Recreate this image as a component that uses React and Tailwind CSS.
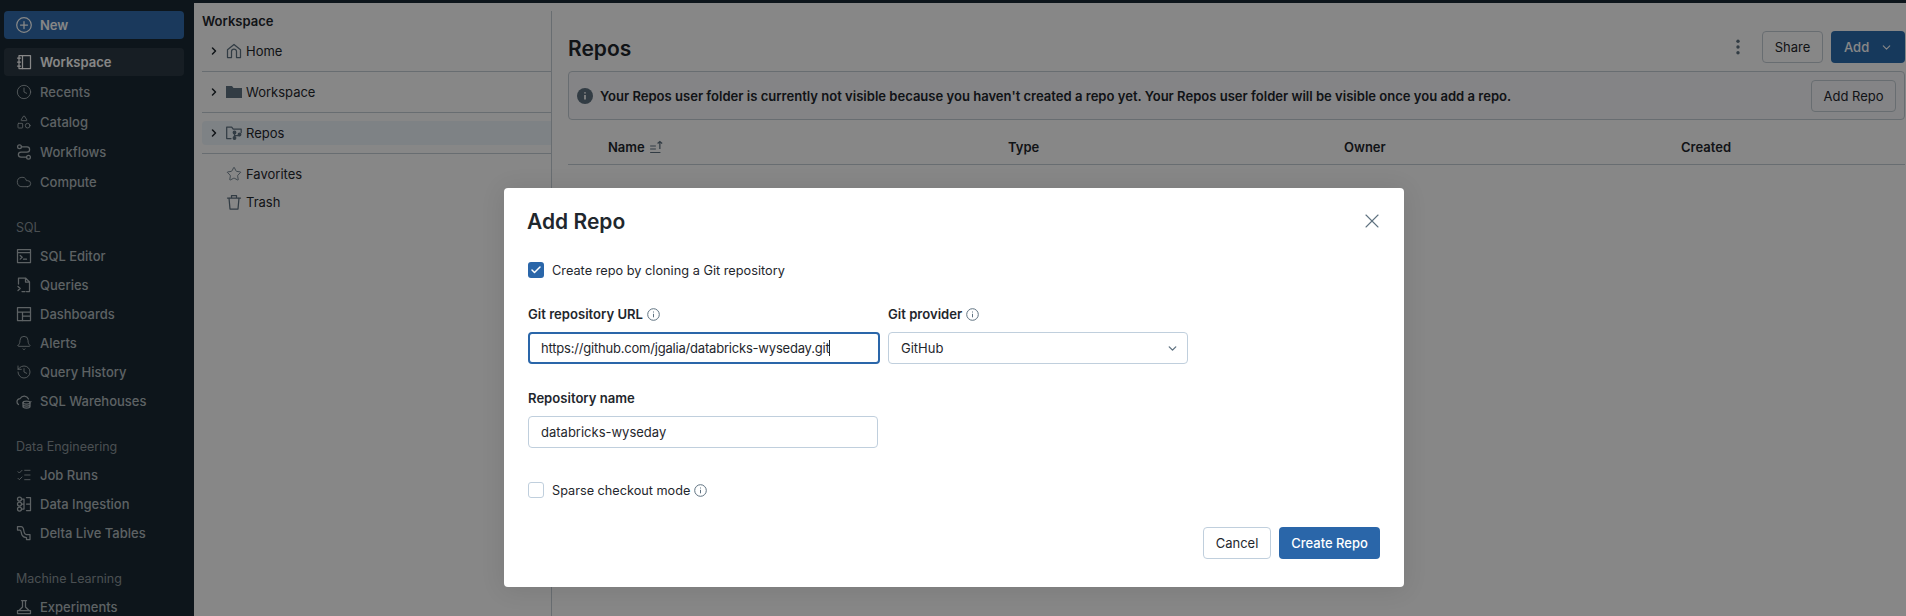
import React from "react";
import { Clock, Shapes, Cloud, Bell, History, ListChecks, Star, X, ChevronDown, ChevronRight, Check } from "lucide-react";

const S = ({ children, size = 16, className = "" }) => (
  <svg width={size} height={size} viewBox="0 0 16 16" fill="none" stroke="currentColor" strokeWidth="1.250" strokeLinecap="round" strokeLinejoin="round" className={`shrink-0 ${className}`}>
    {children}
  </svg>
);

const T = ({ children, className = "" }) => <span className={`pt-[2px] ${className}`}>{children}</span>;

const PlusCircle = () => (<S><circle cx="8" cy="8" r="7.300" /><path d="M8 4.500v7M4.500 8h7" /></S>);
const NotebookI = () => (<S><rect x="3" y="1.500" width="11.500" height="13" /><path d="M6.500 1.500v13M1.500 4h3M1.500 8h3M1.500 12h3" /></S>);
const WorkflowsI = () => (<S><circle cx="3.500" cy="2.800" r="1.900" /><path d="M5.400 2.800H11a2.600 2.600 0 0 1 0 5.200H5a2.600 2.600 0 0 0 0 5.200h5.600" /><circle cx="12.500" cy="13.200" r="1.900" /></S>);
const SqlEditorI = () => (<S><rect x="1.500" y="1.500" width="13" height="13" /><path d="M1.500 4.500h13M4.200 7.500l2 1.800-2 1.800M7.500 11.200h3" /></S>);
const QueriesI = () => (<S><path d="M2.500 7V1h7l4 4v9.500h-3M9.500 1v4h4M2 9.500l2.200 2-2.200 2M6 14.500h3" /></S>);
const DashI = () => (<S><rect x="1.500" y="1.500" width="13" height="13" /><path d="M1.500 6h13M6.500 6v8.500M6.500 10h8" /></S>);
const WarehouseI = () => (<S><path d="M2.500 11.500A3.200 3.200 0 0 1 1 8.700 3.200 3.200 0 0 1 4.200 5.500 4.700 4.700 0 0 1 12.500 6M14.800 8.500H15" /><ellipse cx="10.500" cy="9.500" rx="3.500" ry="1.500" /><path d="M7 9.500v4c0 .8 1.600 1.500 3.500 1.500s3.500-.7 3.500-1.500v-4M7 11.500c0 .8 1.600 1.500 3.500 1.500s3.500-.7 3.500-1.500" /></S>);
const IngestI = () => (<S><circle cx="3.500" cy="3" r="2" /><circle cx="3.500" cy="8" r="2" /><circle cx="3.500" cy="13" r="2" /><path d="M5.500 3h2.500v10H5.500M8 8H5.500M10.500 1.500h4v13h-4M10.500 8h4" /></S>);
const DeltaI = () => (<S><path d="M1.500 1.500h3.500c2.200 0 2.500 1.500 2.800 4 .3 2.400.8 4 2.700 4h3.500v5h-3.500M1.500 1.500v3.500h2.500M4 5c1.500 0 1 3 2 5s2.200 2.500 4.500 2.500v2" /></S>);
const BeakerI = () => (<S><path d="M5.500 1.500h5M6.500 1.500V8L3 11.500M9.500 1.500V8l3.500 3.500M1.500 11.500h13v3h-13z" /></S>);
const HomeI = () => (<S><path d="M1.500 6.800 8 1.500l6.500 5.300v7.700h-4V8.500a2.500 2.500 0 0 0-5 0v6h-4z" /></S>);
const FolderI = () => (<svg width="16" height="16" viewBox="0 0 16 16" fill="currentColor" className="shrink-0"><path d="M0 2h6l1.500 2H16v10H0z" /></svg>);
const RepoI = () => (<S><path d="M5 13.500H.7V2h5l1.500 2h8v3.500" /><circle cx="8.500" cy="7.500" r="1.300" fill="currentColor" /><circle cx="8.500" cy="13" r="1.300" fill="currentColor" /><circle cx="13.500" cy="9.500" r="1.300" fill="currentColor" /><path d="M8.500 7.500V13M8.500 10.500h5" /></S>);
const TrashI = () => (<S><path d="M1.500 4h13M3 4l1 11h8l1-11M5.500 4V1.500h5V4" /></S>);
const SortI = () => (<svg width="16" height="14" viewBox="0 0 14 14" fill="none" stroke="currentColor" strokeWidth="1.100" preserveAspectRatio="none" className="shrink-0"><path d="M1 6h5M1 9h5M1 12.500h9M9.500 9V1.500M7.500 3.500l2-2 2 2" /></svg>);
const InfoO = () => (<svg width="13" height="13" viewBox="0 0 13 13" fill="none" stroke="#5f7281" strokeWidth="1" className="shrink-0"><circle cx="6.500" cy="6.500" r="5.800" /><path d="M6.500 5.800v3.500M6.500 3.500v1" /></svg>);
const InfoF = () => (<svg width="16" height="16" viewBox="0 0 16 16" className="shrink-0"><circle cx="8" cy="8" r="8" fill="#5f7281" /><path d="M8 7v4.500M8 4.200v1.400" stroke="#fff" strokeWidth="1.700" /></svg>);
const Dots = () => (<svg width="16" height="16" viewBox="0 0 16 16" fill="#5f7281" className="mr-[16px] shrink-0"><circle cx="8" cy="2.200" r="1.700" /><circle cx="8" cy="8" r="1.700" /><circle cx="8" cy="13.800" r="1.700" /></svg>);

const Item = ({ icon, label, h = "h-[29px]" }) => (
  <div className={`flex items-center gap-2 pl-4 text-[13px] font-medium text-[#b0b9be] ${h}`}>
    {icon}
    <T>{label}</T>
  </div>
);
const Section = ({ children }) => (
  <div className="mt-[21px] mb-1 flex h-5 items-center pl-4 text-[12.500px] text-[#8c969c]"><T>{children}</T></div>
);

const TreeRow = ({ chevron, icon, label, className = "" }) => (
  <div className={`flex h-6 items-center ${className}`}>
    <div className="flex w-6 justify-center text-[#1f272d]">
      {chevron && <ChevronRight size={12} strokeWidth={3} />}
    </div>
    <div className="text-[#5f7281]">{icon}</div>
    <T className="ml-1 text-[13px] text-[#1f272d]">{label}</T>
  </div>
);

const Label = ({ children, info }) => (
  <div className="flex h-5 items-center gap-1 text-[13.100px] font-semibold text-[#1f272d]">
    <T>{children}</T>
    {info && <InfoO />}
  </div>
);

export default function App() {
  return (
    <div className="relative flex h-[616px] w-[1906px] flex-col overflow-hidden bg-white font-['Inter',sans-serif]">
      <div className="h-[3px] shrink-0 bg-[#1a2933]" />
      <div className="flex min-h-0 flex-1">
        {/* Sidebar */}
        <aside className="w-[194px] shrink-0 overflow-hidden bg-[#1a2933] pt-2">
          <div className="ml-1 flex h-7 w-[180px] items-center gap-2 rounded bg-[#316dae] pl-3 text-[13px] font-semibold text-white">
            <PlusCircle />
            <T>New</T>
          </div>
          <div className="mt-[9px] flex flex-col gap-[2px]">
            <div className="ml-1 flex h-7 w-[180px] items-center gap-2 rounded bg-[#2d3a44] pl-3 text-[13px] font-semibold text-white">
              <NotebookI />
              <T>Workspace</T>
            </div>
            <Item h="h-7" icon={<Clock size={16} strokeWidth={1.250} />} label="Recents" />
            <Item h="h-7" icon={<Shapes size={16} strokeWidth={1.250} />} label="Catalog" />
            <Item h="h-7" icon={<WorkflowsI />} label="Workflows" />
            <Item h="h-7" icon={<Cloud size={16} strokeWidth={1.250} />} label="Compute" />
          </div>
          <Section>SQL</Section>
          <Item icon={<SqlEditorI />} label="SQL Editor" />
          <Item icon={<QueriesI />} label="Queries" />
          <Item icon={<DashI />} label="Dashboards" />
          <Item icon={<Bell size={16} strokeWidth={1.250} />} label="Alerts" />
          <Item icon={<History size={16} strokeWidth={1.250} />} label="Query History" />
          <Item icon={<WarehouseI />} label="SQL Warehouses" />
          <Section>Data Engineering</Section>
          <Item icon={<ListChecks size={16} strokeWidth={1.250} />} label="Job Runs" />
          <Item icon={<IngestI />} label="Data Ingestion" />
          <Item icon={<DeltaI />} label="Delta Live Tables" />
          <Section>Machine Learning</Section>
          <Item icon={<BeakerI />} label="Experiments" />
        </aside>

        {/* Workspace tree */}
        <div className="w-[358px] shrink-0 pt-2 pl-2">
          <div className="h-full border-r border-[#c5ced6]">
            <div className="flex h-5 items-center text-[13px] font-semibold text-[#1f272d]"><T>Workspace</T></div>
            <TreeRow chevron icon={<HomeI />} label="Home" className="mt-2" />
            <div className="mt-2 h-px bg-[#c5ced6]" />
            <TreeRow chevron icon={<FolderI />} label="Workspace" className="mt-2" />
            <div className="mt-2 h-px bg-[#c5ced6]" />
            <TreeRow chevron icon={<RepoI />} label="Repos" className="mt-2 rounded-l bg-[#eff5fb]" />
            <div className="mt-2 h-px bg-[#c5ced6]" />
            <TreeRow icon={<Star size={16} strokeWidth={1.250} />} label="Favorites" className="mt-2" />
            <TreeRow icon={<TrashI />} label="Trash" className="mt-1" />
          </div>
        </div>

        {/* Main */}
        <main className="min-w-0 flex-1 pt-7 pr-[1px] pl-4">
          <div className="flex h-8 items-center">
            <h1 className="pt-[4px] text-[21px] font-semibold text-[#1f272d]">Repos</h1>
            <div className="ml-auto flex items-center">
              <Dots />
              <button className="h-8 w-[61px] rounded border border-[#c5ced6] pt-[2px] text-[13px] text-[#1f272d]">Share</button>
              <button className="ml-2 flex h-8 w-[74px] items-center gap-[11px] rounded bg-[#2a6cae] pl-[13px] text-[13px] font-medium text-white">
                <T>Add</T> <ChevronDown size={13} strokeWidth={2} />
              </button>
            </div>
          </div>
          <div className="mt-2 flex h-[49px] items-center rounded border border-[#c5ced6] bg-[#fafafd] pr-2 pl-[8px]">
            <InfoF />
            <T className="ml-[7px] text-[13.050px] font-semibold text-[#1f272d]">
              Your Repos user folder is currently not visible because you haven't created a repo yet. Your Repos user folder will be visible once you add a repo.
            </T>
            <button className="ml-auto h-8 w-[85px] rounded border border-[#c5ced6] pt-[2px] text-[13px] text-[#1f272d]">Add Repo</button>
          </div>
          <div className="mt-[9px] flex h-9 items-center border-b border-[#c5ced6] pl-10 text-[13px] font-semibold text-[#1f272d]">
            <div className="flex w-[400px] items-center gap-1"><T>Name</T> <span className="text-[#5f7281]"><SortI /></span></div>
            <T className="w-[336px]">Type</T>
            <T className="w-[337px]">Owner</T>
            <T>Created</T>
          </div>
        </main>
      </div>

      {/* Modal overlay */}
      <div className="absolute inset-0 flex justify-center bg-black/[0.47] pt-[188px] pl-[2px]">
        <div className="h-[399px] w-[900px] rounded bg-white px-6 pt-[19px] shadow-[0_2px_24px_rgba(0,0,0,0.1)]">
          <div className="flex h-7 items-center justify-between">
            <h2 className="-ml-px pt-[1px] text-[21px] font-semibold text-[#1f272d]">Add Repo</h2>
            <X size={24} strokeWidth={1.100} className="mr-[-4px] text-[#5f7281]" />
          </div>
          <div className="mt-[25px] flex h-5 items-center gap-2 text-[12.750px] text-[#1f272d]">
            <div className="flex h-4 w-4 items-center justify-center rounded-[3px] bg-[#2a66a9]">
              <Check size={12} strokeWidth={3} className="text-white" />
            </div>
            <T>Create repo by cloning a Git repository</T>
          </div>
          <div className="mt-6 flex gap-2">
            <div className="w-[352px]">
              <Label info>Git repository URL</Label>
              <div className="mt-2 flex h-8 items-center rounded border-2 border-[#2a66a9] px-[11px] text-[13px] tracking-[-0.2px] text-[#1f272d]">
                <T>https://github.com/jgalia/databricks-wyseday.git</T>
                <span className="h-4 w-px bg-[#1f272d]" />
              </div>
            </div>
            <div className="w-[300px]">
              <Label info>Git provider</Label>
              <div className="mt-2 flex h-8 items-center justify-between rounded border border-[#c0cfdd] pr-2 pl-3 text-[13px] text-[#1f272d]">
                <T>GitHub</T>
                <ChevronDown size={13} strokeWidth={2.500} className="text-[#5f7281]" />
              </div>
            </div>
          </div>
          <div className="mt-6">
            <Label>Repository name</Label>
            <div className="mt-2 flex h-8 w-[350px] items-center rounded border border-[#c0cfdd] px-3 text-[13px] text-[#1f272d]"><T>databricks-wyseday</T></div>
          </div>
          <div className="mt-8 flex h-5 items-center gap-2 text-[12.700px] text-[#1f272d]">
            <div className="h-4 w-4 rounded-[3px] border border-[#c0cfdd]" />
            <T>Sparse checkout mode</T>
            <span className="-ml-1"><InfoO /></span>
          </div>
          <div className="mt-[27px] flex justify-end gap-2">
            <button className="h-8 w-[68px] rounded border border-[#c0cfdd] pt-[2px] text-[13px] text-[#1f272d]">Cancel</button>
            <button className="h-8 w-[101px] rounded bg-[#2a66a9] pt-[2px] text-[13px] font-medium text-white">Create Repo</button>
          </div>
        </div>
      </div>
    </div>
  );
}
